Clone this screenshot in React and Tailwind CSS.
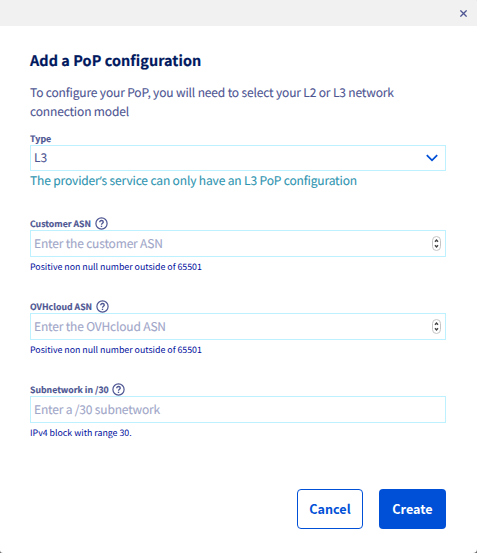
function Help() {
  return (
    <svg className="ml-[3.5px] h-[13px] w-[13px] shrink-0" viewBox="0 0 13 13" fill="none" stroke="#4d5592">
      <circle cx="6.5" cy="6.5" r="5.6" strokeWidth="1.2" />
      <path d="M4.7 5.2C4.7 4.1 5.5 3.5 6.5 3.5S8.3 4.1 8.3 5C8.3 6.2 6.5 6.3 6.5 7.7" strokeWidth="1.3" />
      <path d="M6.5 8.7V10" strokeWidth="1.4" />
    </svg>
  );
}

function Stepper() {
  return (
    <svg className="h-[15px] w-[9px]" viewBox="0 0 9 15" fill="none">
      <rect x=".5" y=".5" width="8" height="14" rx="4" fill="#fff" stroke="#c4c4c4" />
      <path d="M3 5.8L4.5 4L6 5.8M3 9.2L4.5 11L6 9.2" stroke="#444" strokeWidth="1.4" />
    </svg>
  );
}

function Field({ label, placeholder, hint, stepper }) {
  return (
    <div className="h-[83px]">
      <div className="flex h-[13px] items-center">
        <span className="text-[8.7px] leading-[13px] font-bold tracking-[0.02px] text-[#4d5592] [-webkit-text-stroke:0.15px]">{label}</span>
        <Help />
      </div>
      <div className="flex h-[27px] items-center justify-between border border-[#bef1ff] pr-[4px] pl-[3px]">
        <span className="text-[12px] leading-[25px] tracking-[-0.17px] text-[#a0a6c8] [-webkit-text-stroke:0.1px]">{placeholder}</span>
        {stepper && <Stepper />}
      </div>
      <p className="mt-[3px] text-[8.8px] leading-[14px] text-[#000e9c]">{hint}</p>
    </div>
  );
}

export default function App() {
  return (
    <div className="h-[553px] w-[477px] bg-[#666]">
      <div className="flex h-full flex-col overflow-hidden rounded-tr-[1px] rounded-br-[4px] rounded-bl-[3px] bg-white whitespace-nowrap [font-family:'Noto_Sans_CJK_SC',sans-serif] [text-rendering:geometricPrecision]">
        <header className="flex h-[26px] shrink-0 items-center justify-end bg-[#f1f1f1] pr-[10px]">
          <svg className="h-[7px] w-[7px]" viewBox="0 0 7 7" stroke="#4d5592" strokeWidth="1.3">
            <path d="M.4 .4L6.6 6.6M6.6 .4L.4 6.6" />
          </svg>
        </header>
        <main className="flex flex-1 flex-col pr-[31px] pl-[30px]">
          <h1 className="mt-[25px] text-[14.4px] leading-[20px] font-bold tracking-[0.08px] text-[#00185e] [-webkit-text-stroke:0.2px]">Add a PoP configuration</h1>
          <p className="mt-[12px] text-[12px] leading-[19px] tracking-[-0.15px] text-[#4d5592] [-webkit-text-stroke:0.1px]">
            To configure your PoP, you will need to select your L2 or L3 network
            <br />
            connection model
          </p>
          <div className="mt-[11px] h-[85px]">
            <p className="h-[13px] text-[8.8px] leading-[13px] font-bold tracking-[0.05px] text-[#4d5592] [-webkit-text-stroke:0.15px]">Type</p>
            <div className="flex h-[26px] items-center justify-between border border-[#bef1ff] pr-[7px] pl-[3px]">
              <span className="text-[12px] leading-[24px] text-[#4d5592] [-webkit-text-stroke:0.1px]">L3</span>
              <svg className="h-[8px] w-[12px]" viewBox="0 0 12 8" fill="none" stroke="#0050d7" strokeWidth="1.8">
                <path d="M.8 1.2L6 6.3L11.2 1.2" />
              </svg>
            </div>
            <p className="text-[12px] leading-[20px] tracking-[-0.14px] text-[#2d94b0] [-webkit-text-stroke:0.1px]">
              The provider<span className="leading-none [font-family:'Open_Sans',sans-serif]">’</span>s service can only have an L3 PoP configuration
            </p>
          </div>
          <Field label="Customer ASN" placeholder="Enter the customer ASN" hint="Positive non null number outside of 65501" stepper />
          <Field label="OVHcloud ASN" placeholder="Enter the OVHcloud ASN" hint="Positive non null number outside of 65501" stepper />
          <Field label="Subnetwork in /30" placeholder="Enter a /30 subnetwork" hint="IPv4 block with range 30." />
          <div className="mt-[23px] flex justify-end gap-[16px] text-[12.6px] font-bold">
            <button className="h-[40px] w-[66px] rounded-[4px] border border-[#0050d7] text-[#0050d7]">Cancel</button>
            <button className="h-[40px] w-[67px] rounded-[4px] bg-[#0050d7] text-white">Create</button>
          </div>
        </main>
      </div>
    </div>
  );
}
